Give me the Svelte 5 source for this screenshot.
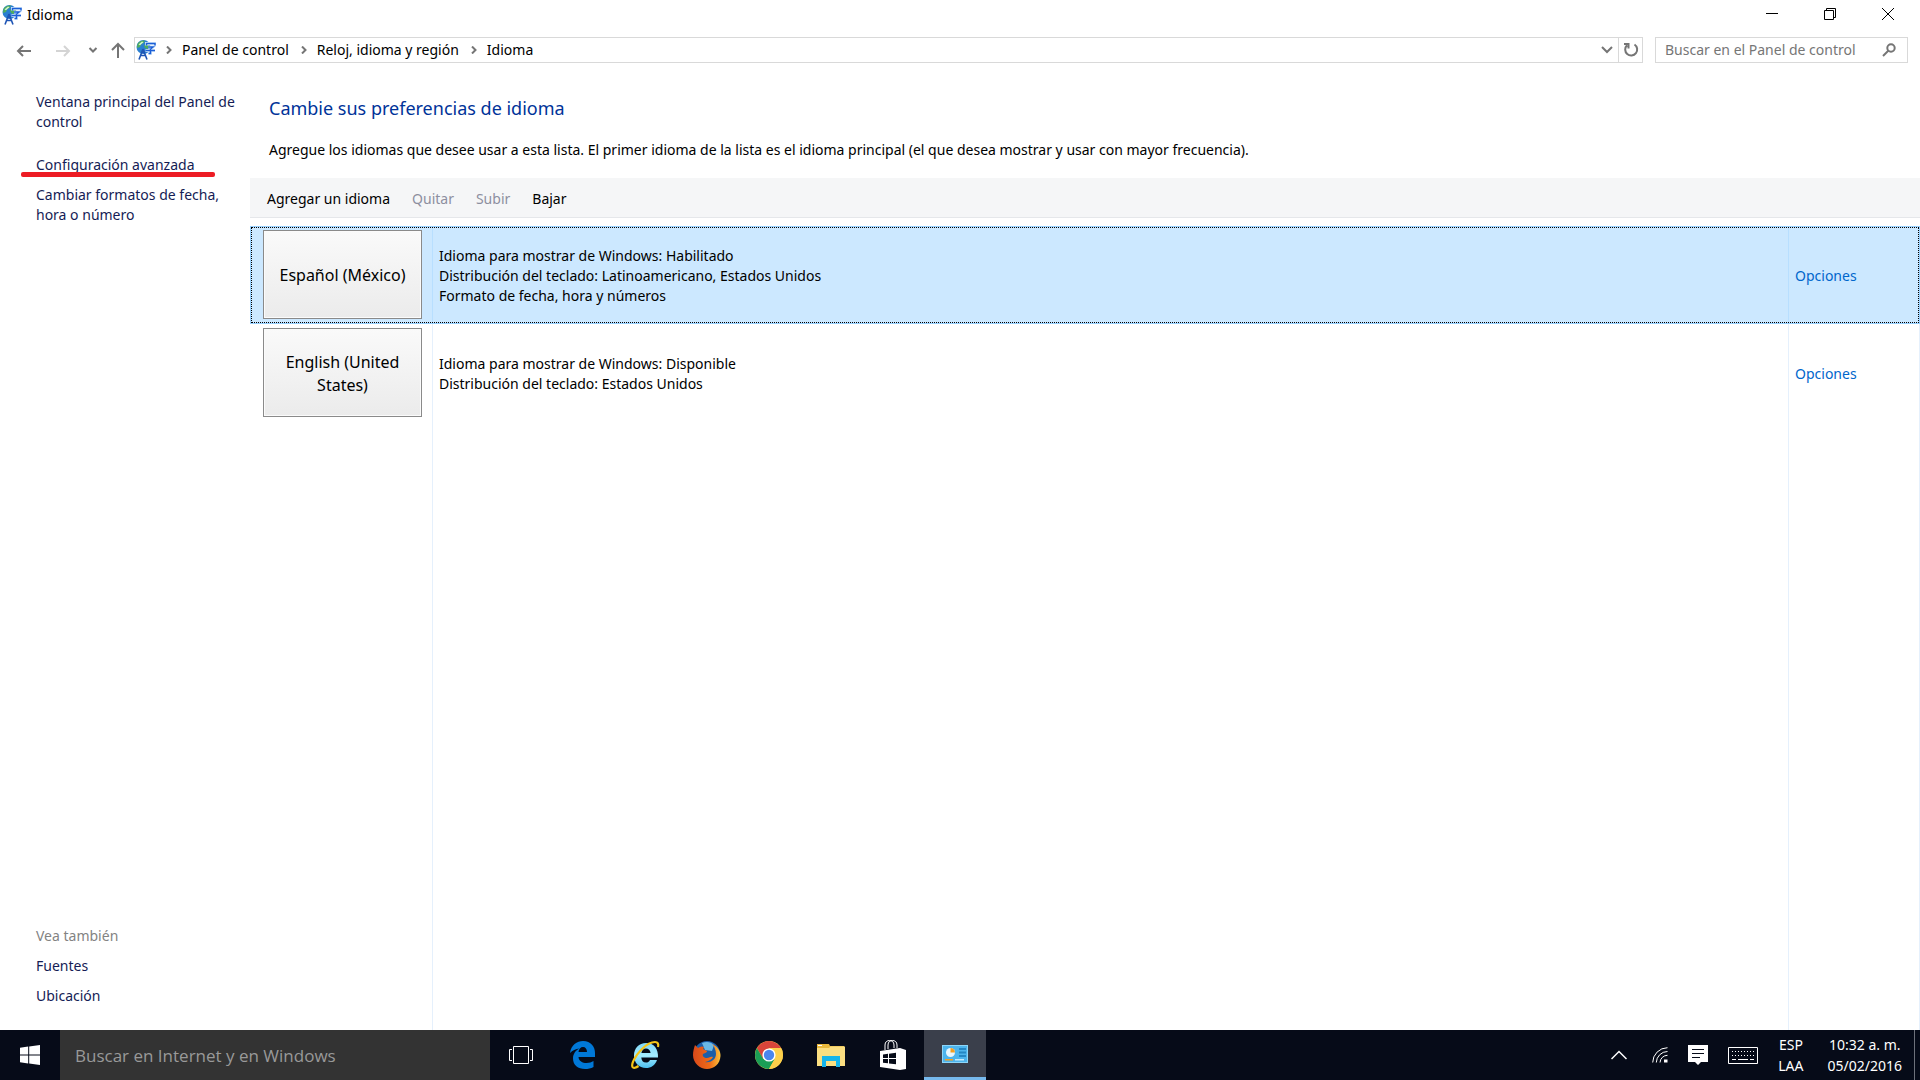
<script lang="ts">
  interface Language {
    name: string;
    details: string[];
    selected: boolean;
  }

  const crumbs = ['Panel de control', 'Reloj, idioma y región', 'Idioma'];

  const commands = [
    { label: 'Agregar un idioma', disabled: false },
    { label: 'Quitar', disabled: true },
    { label: 'Subir', disabled: true },
    { label: 'Bajar', disabled: false }
  ];

  let languages: Language[] = $state([
    {
      name: 'Español (México)',
      details: [
        'Idioma para mostrar de Windows: Habilitado',
        'Distribución del teclado: Latinoamericano, Estados Unidos',
        'Formato de fecha, hora y números'
      ],
      selected: true
    },
    {
      name: 'English (United States)',
      details: ['Idioma para mostrar de Windows: Disponible', 'Distribución del teclado: Estados Unidos'],
      selected: false
    }
  ]);

  function select(index: number) {
    languages.forEach((language, i) => (language.selected = i === index));
  }
</script>

{#snippet languageIcon()}
  <svg class="language-icon" width="20" height="20" viewBox="0 0 20 20" aria-hidden="true">
    <circle cx="7.5" cy="7" r="7" fill="#2a7fd0" />
    <path d="M1.500 4C3 1.500 6 0 9 .5L7.500 3 5 4.500 4 7 1 8zM8 5l4-2 2 2-2 4-3-1z" fill="#4fae5c" />
    <path d="M2.500 4.500L6 1.500l1.500.7-3.500 3z" fill="#d3f3cc" />
    <path d="M10.500 5.500V3.500h8.500v2M12 7h5l-2.500 2M9.500 10.500h9.500M14.500 9v4.500h-2" fill="none" stroke="#d5e8fb" stroke-width="3" />
    <path d="M10.500 5.500V3.500h8.500v2M12 7h5l-2.500 2M9.500 10.500h9.500M14.500 9v4.500h-2" fill="none" stroke="#1c5fd6" stroke-width="1.500" />
    <path d="M7 9L3 19.500M7 9l4 10.500M4.500 15.500h5M5.500 12.500h3" fill="none" stroke="#1f55b5" stroke-width="1.600" />
  </svg>
{/snippet}

<div class="screen">
  <header class="titlebar">
    {@render languageIcon()}
    <span class="title">Idioma</span>
    <div class="window-buttons">
      <button aria-label="Minimizar">
        <svg width="12" height="12" viewBox="0 0 12 12"><path d="M0 5.5h12" /></svg>
      </button>
      <button aria-label="Restaurar">
        <svg width="12" height="12" viewBox="0 0 12 12"><path d="M.5 2.5h9v9h-9zM2.500 2.500v-2h9v9h-2" /></svg>
      </button>
      <button aria-label="Cerrar">
        <svg width="12" height="12" viewBox="0 0 12 12"><path d="M0 0l12 12M12 0L0 12" /></svg>
      </button>
    </div>
  </header>

  <nav class="navbar" aria-label="Navegación">
    <button class="nav-button back" aria-label="Atrás">
      <svg width="16" height="14" viewBox="0 0 16 14"><path d="M15 8H2M7 3L2 8l5 5" /></svg>
    </button>
    <button class="nav-button forward" aria-label="Adelante" disabled>
      <svg width="16" height="14" viewBox="0 0 16 14"><path d="M1 8h13M9 3l5 5-5 5" /></svg>
    </button>
    <button class="nav-button recent" aria-label="Ubicaciones recientes">
      <svg width="10" height="6" viewBox="0 0 10 6"><path d="M1.500 1L5 4.500 8.500 1" /></svg>
    </button>
    <button class="nav-button up" aria-label="Subir un nivel">
      <svg width="14" height="16" viewBox="0 0 14 16"><path d="M7 16V2M1 8l6-6 6 6" /></svg>
    </button>

    <div class="address">
      {@render languageIcon()}
      {#each crumbs as crumb}
        <svg class="crumb-arrow" width="6" height="8" viewBox="0 0 6 8" aria-hidden="true"><path d="M1 .5L4.500 4 1 7.500" /></svg>
        <a href="#top">{crumb}</a>
      {/each}
      <button class="history" aria-label="Ubicaciones anteriores">
        <svg width="12" height="8" viewBox="0 0 12 8"><path d="M1 1l5 5 5-5" /></svg>
      </button>
      <button class="refresh" aria-label="Actualizar">
        <svg width="16" height="16" viewBox="0 0 16 16"><path d="M11.500 2.500A6 6 0 1 1 4 3.200M1 2h4.500v4.500" /></svg>
      </button>
    </div>

    <div class="search">
      <input type="text" placeholder="Buscar en el Panel de control" aria-label="Buscar en el Panel de control" />
      <svg width="14" height="14" viewBox="0 0 14 14" aria-hidden="true">
        <circle cx="9" cy="5" r="3.700" /><path d="M6.500 7.500L1 13" />
      </svg>
    </div>
  </nav>

  <div class="body">
    <aside class="sidebar">
      <a href="#home">Ventana principal del Panel de control</a>
      <a href="#advanced" class="marked">Configuración avanzada</a>
      <a href="#formats">Cambiar formatos de fecha, hora o número</a>
      <div class="see-also">
        <span>Vea también</span>
        <a href="#fonts">Fuentes</a>
        <a href="#location">Ubicación</a>
      </div>
    </aside>

    <main class="content">
      <h1>Cambie sus preferencias de idioma</h1>
      <p class="intro">
        Agregue los idiomas que desee usar a esta lista. El primer idioma de la lista es el idioma principal (el que
        desea mostrar y usar con mayor frecuencia).
      </p>

      <div class="toolbar">
        {#each commands as command}
          <button disabled={command.disabled}>{command.label}</button>
        {/each}
      </div>

      <div class="list">
        <table>
          <tbody>
            {#each languages as language, i}
              <tr class="language" class:selected={language.selected}>
                <td class="name"><button onclick={() => select(i)}>{language.name}</button></td>
                <td class="details">
                  {#each language.details as detail}
                    <div>{detail}</div>
                  {/each}
                </td>
                <td class="options"><a href="#options">Opciones</a></td>
              </tr>
            {/each}
            <tr class="filler"><td></td><td></td><td></td></tr>
          </tbody>
        </table>
      </div>
    </main>
  </div>

  <footer class="taskbar">
    <button class="start" aria-label="Inicio">
      <svg width="20" height="20" viewBox="0 0 20 20" fill="#fff">
        <path d="M0 2.800L8.200 1.600V9.500H0zM9.200 1.400L20 0v9.500H9.200zM0 10.500h8.200v7.900L0 17.200zM9.200 10.500H20V20L9.200 18.500z" />
      </svg>
    </button>
    <input class="cortana" type="text" placeholder="Buscar en Internet y en Windows" aria-label="Buscar en Internet y en Windows" />

    <button class="app" aria-label="Vista de tareas">
      <svg width="24" height="18" viewBox="0 0 24 18" fill="none" stroke="#fff">
        <path d="M4.500.5h15v17h-15zM3 3.500H.5v11H3M21 3.500h2.500v11H21" />
      </svg>
    </button>
    <button class="app" aria-label="Microsoft Edge">
      <svg width="26" height="28" viewBox="0 0 26 28">
        <path
          d="M0 12C1 4 7 0 13 0c8 0 12 6 12 12v4H8.500c.3 4 4 6 8 6 3 0 5-.8 7-2v6c-2.500 1.500-5.500 2-8.500 2C8 28 3 24 3 17.500 3 13 5.500 9.500 9.500 7.500 5.500 8 2.500 9.500 0 12zm8.500-1H17c0-3-1.500-5-4-5s-4.200 2-4.500 5z"
          fill="#0078d7"
        />
      </svg>
    </button>
    <button class="app" aria-label="Internet Explorer">
      <svg width="30" height="30" viewBox="0 0 30 30">
        <defs>
          <linearGradient id="ie" x1="0" y1="0" x2="0" y2="1">
            <stop offset="0" stop-color="#7fd8f8" /><stop offset=".5" stop-color="#a4ecff" /><stop offset="1" stop-color="#4cc0f0" />
          </linearGradient>
        </defs>
        <path
          d="M16 3C9 3 4 8 4 15.500S9 28 16 28c5 0 9-2.500 11-8h-7c-1 2-2.300 2.500-4 2.500-3 0-4.500-2-4.700-5H28C28.500 9 24 3 16 3zm-4.600 10C12 10 13.500 8.500 16 8.500s4.200 1.500 4.600 4.500z"
          fill="url(#ie)"
        />
        <path d="M28 7c.8-3-.2-5-3-5-3 0-8 2-13 7C5 16 1 24 2.500 27c1 1.500 3.500.8 6-1" fill="none" stroke="#f5c518" stroke-width="2.200" />
      </svg>
    </button>
    <button class="app" aria-label="Firefox">
      <svg width="28" height="28" viewBox="0 0 28 28">
        <defs>
          <linearGradient id="fox" x1="0" y1="0" x2="1" y2="0">
            <stop offset="0" stop-color="#d9491a" /><stop offset=".6" stop-color="#ee6a18" /><stop offset="1" stop-color="#fcc33c" />
          </linearGradient>
        </defs>
        <circle cx="14" cy="13" r="13" fill="#1b5ea8" />
        <path d="M9 2c5-2 9-1 12 2l-2 6-7-1z" fill="#6bb9e6" />
        <path
          d="M2 4l3 3c2-1.500 4-2 6-1l-1 2 4 2c0 2-3 2-4 3-1 2 1 4 4 4 2 0 3-2 6-1-2 4-8 5-8 5 5 1 11-2 11-8 0-4-2-8-4-10 5 2 9 7 8.500 12C27 23 21 28 14 28S0 22 0 14C0 10 1 7 2 4z"
          fill="url(#fox)"
        />
      </svg>
    </button>
    <button class="app" aria-label="Google Chrome">
      <svg width="28" height="28" viewBox="0 0 28 28">
        <circle cx="14" cy="14" r="14" fill="#fdd04b" />
        <path d="M14 7h12.100A14 14 0 0 0 1.900 7l6 10.500z" fill="#d9453a" />
        <path d="M1.900 7A14 14 0 0 0 14 28l6-10.500L14 20l-6-2.500z" fill="#1b9e56" />
        <path d="M20 17.500L14 28A14 14 0 0 0 26.100 7H14z" fill="#fdd04b" />
        <circle cx="14" cy="14" r="6.600" fill="#fff" />
        <circle cx="14" cy="14" r="5.200" fill="#4a86ee" />
      </svg>
    </button>
    <button class="app" aria-label="Explorador de archivos">
      <svg width="28" height="24" viewBox="0 0 28 24">
        <path d="M0 1h12l1 2h14v20H0z" fill="#e9b93c" />
        <path d="M0 5h12l1.500-1.500H28V23H0z" fill="#fbdf81" />
        <path d="M1 2h4v1H1z" fill="#fff" />
        <path d="M5 24V13h18v11h-4v-6H9v6z" fill="#16b5ea" />
      </svg>
    </button>
    <button class="app" aria-label="Tienda">
      <svg width="26" height="30" viewBox="0 0 26 30">
        <path d="M5 10V5c0-3 2-4.500 4.500-4.500S14 2 14 5v3M8 9V5c0-3 2-4.500 4.500-4.500S17 2 17 5v3" fill="none" stroke="#fff" />
        <path d="M0 11l20-3 6 2v19l-6 1-20-3z" fill="#fff" />
        <path d="M3 14.500l5-.7v4.200H3zM9 13.700l7-1V18H9zM3 19h5v4.200l-5-.5zM9 19h7v5.200l-7-.8z" fill="#060b18" />
      </svg>
    </button>
    <button class="app active" aria-label="Panel de control">
      <svg width="26" height="18" viewBox="0 0 26 18">
        <path d="M0 0h26v18H0z" fill="#8dd6f8" />
        <path d="M1 1h24v16H1z" fill="#4db4ec" />
        <circle cx="8.500" cy="7.500" r="4.500" fill="#e8f6fd" />
        <path d="M8.500 7.500V3a4.500 4.500 0 0 1 4.500 4.500z" fill="#f5a021" />
        <path d="M17 3h7v2h-7zM17 6.500h7v2h-7zM17 10h7v2h-7z" fill="#2587c4" />
        <path d="M3 14h8v1.500H3z" fill="#f5a021" /><path d="M13 14h9v1.500h-9z" fill="#c8ebfb" />
      </svg>
    </button>

    <div class="tray">
      <button aria-label="Mostrar iconos ocultos">
        <svg width="16" height="10" viewBox="0 0 16 10"><path d="M.5 9L8 1.500 15.500 9" stroke-width="1.500" /></svg>
      </button>
      <button class="wifi" aria-label="Red">
        <svg width="16" height="16" viewBox="0 0 16 16">
          <path d="M.7 15.500A15 15 0 0 1 15.500.7M4.300 15.500A11.300 11.300 0 0 1 15.500 4.500M8 15.500a7.500 7.500 0 0 1 7.500-7.200" />
          <path d="M12 12.500h3.500v3H12z" fill="#fff" stroke="none" />
        </svg>
      </button>
      <button aria-label="Centro de actividades">
        <svg width="20" height="20" viewBox="0 0 20 20">
          <path d="M0 0h20v17h-7l-3 3-3-3H0z" fill="#fff" stroke="none" />
          <path d="M4 4.500h12M4 8.500h12M4 12.500h8" stroke="#060b18" />
        </svg>
      </button>
      <button aria-label="Teclado táctil">
        <svg width="30" height="17" viewBox="0 0 30 17">
          <path d="M.5.5h29v16H.5z" />
          <path d="M4 4.500h23M4 8.500h23" stroke-dasharray="1 2" /><path d="M4 12.500h4M10 12.500h10M22 12.500h4" />
        </svg>
      </button>
      <button class="input-language" aria-label="Idioma de entrada"><span>ESP</span><span>LAA</span></button>
      <button class="clock" aria-label="Reloj"><span>10:32 a. m.</span><span>05/02/2016</span></button>
      <button class="show-desktop" aria-label="Mostrar escritorio"></button>
    </div>
  </footer>
</div>

<style>
  :global(body) {
    margin: 0;
    background: #fff;
  }

  .screen {
    display: flex;
    flex-direction: column;
    min-height: 100vh;
    font-family: 'Noto Sans', 'Open Sans', sans-serif;
    font-size: 14px;
    line-height: 20px;
    color: #000;
  }

  button,
  input {
    font: inherit;
    color: inherit;
    border: 0;
    padding: 0;
    background: none;
    border-radius: 0;
  }

  button svg {
    display: block;
  }

  a {
    color: inherit;
    text-decoration: none;
  }

  .language-icon {
    flex: none;
  }

  .titlebar {
    display: flex;
    align-items: center;
    height: 29px;
    padding: 0 3px 0 2px;
  }

  .title {
    flex: 1;
    padding-left: 5px;
  }

  .window-buttons {
    display: flex;
    align-self: flex-start;
  }

  .window-buttons button {
    display: grid;
    place-items: center;
    width: 58px;
    height: 28px;
  }

  .window-buttons svg {
    fill: none;
    stroke: #000;
  }

  .navbar {
    display: flex;
    align-items: center;
    height: 42px;
    padding: 0 12px 0 16px;
  }

  .navbar svg:not(.language-icon) {
    fill: none;
    stroke: #757575;
    stroke-width: 2;
  }

  .nav-button {
    flex: none;
  }

  .forward {
    margin-left: 23px;
  }

  .navbar .forward svg {
    stroke: #d4d4d4;
  }

  .recent {
    margin-left: 17px;
  }

  .up {
    margin: 0 9px 0 13px;
  }

  .address {
    display: flex;
    flex: 1;
    align-items: center;
    height: 24px;
    padding-left: 1px;
    border: 1px solid #d9d9d9;
  }

  .address a {
    margin-right: 2px;
  }

  .crumb-arrow {
    margin: 0 10px;
  }

  .history {
    display: grid;
    place-items: center;
    width: 22px;
    height: 24px;
    margin-left: auto;
  }

  .refresh {
    display: grid;
    place-items: center;
    width: 24px;
    height: 24px;
    border-left: 1px solid #d9d9d9;
  }

  .search {
    display: flex;
    align-items: center;
    width: 251px;
    height: 24px;
    margin-left: 12px;
    border: 1px solid #d9d9d9;
  }

  .search input {
    flex: 1;
    min-width: 0;
    padding-left: 9px;
  }

  .search input::placeholder {
    color: #767676;
  }

  .search svg {
    margin: 0 11px;
  }

  .body {
    display: flex;
    flex: 1;
  }

  .sidebar {
    display: flex;
    flex: none;
    flex-direction: column;
    gap: 10px;
    box-sizing: border-box;
    width: 250px;
    padding: 21px 10px 24px 36px;
    color: #151c55;
  }

  .marked {
    position: relative;
    margin-top: 13px;
  }

  .marked::after {
    content: '';
    position: absolute;
    left: -15px;
    top: 17px;
    width: 194px;
    height: 5px;
    border-radius: 2px;
    background: #ed1c24;
  }

  .see-also {
    display: flex;
    flex-direction: column;
    gap: 10px;
    margin-top: auto;
  }

  .see-also span {
    color: #838383;
  }

  .content {
    display: flex;
    flex: 1;
    flex-direction: column;
  }

  h1 {
    margin: 0;
    padding: 22px 19px 0;
    font-size: 18px;
    font-weight: 400;
    line-height: 30px;
    color: #003399;
  }

  .intro {
    margin: 17px 19px 18px;
  }

  .toolbar {
    display: flex;
    gap: 22px;
    height: 37px;
    padding: 2px 17px 0;
    border-bottom: 1px solid #e5e7ea;
    background: #f5f6f7;
  }

  .toolbar button:disabled {
    color: #8d8f9f;
  }

  .list {
    display: grid;
    flex: 1;
    margin-top: 8px;
  }

  table {
    width: 100%;
    border-collapse: separate;
    border-spacing: 0;
    table-layout: fixed;
  }

  td {
    box-sizing: border-box;
    padding: 0;
    border-right: 1px solid #e5f0fc;
  }

  td:first-child {
    width: 183px;
  }

  td:last-child {
    width: 131px;
  }

  .language {
    position: relative;
    height: 98px;
  }

  .selected {
    background: #cce8ff;
    outline: 1px solid #99d1ff;
    outline-offset: -1px;
  }

  .selected td {
    border-color: #b8dfff;
  }

  /* focus rectangle across the whole row */
  .selected .name::after {
    content: '';
    position: absolute;
    inset: 1px;
    border: 1px dotted #000;
    pointer-events: none;
  }

  .name {
    padding: 4px 0 5px 13px;
  }

  .name button {
    display: block;
    box-sizing: border-box;
    width: 159px;
    height: 89px;
    padding: 2px 12px 0;
    border: 1px solid #8a8a8a;
    box-shadow: inset 0 0 0 1px #fbfbfb;
    background: linear-gradient(#fafafa, #ebebeb);
    font-size: 16px;
    line-height: 23px;
  }

  .details,
  .options {
    padding: 2px 0 0 6px;
  }

  .options {
    color: #0066cc;
  }

  .taskbar {
    display: flex;
    height: 50px;
    background: #060b18;
    color: #fff;
  }

  .start {
    display: grid;
    place-items: center;
    width: 60px;
  }

  .cortana {
    box-sizing: border-box;
    width: 430px;
    padding: 2px 15px 0;
    background: #333;
    font-family: 'Open Sans', 'Noto Sans', sans-serif;
    font-size: 17px;
  }

  .cortana::placeholder {
    color: #999;
  }

  .app {
    display: grid;
    place-items: center;
    width: 62px;
  }

  .active {
    border-bottom: 3px solid #76b9ed;
    background: #3a3f4b;
  }

  .tray {
    display: flex;
    align-items: center;
    gap: 20px;
    margin-left: auto;
  }

  .tray svg {
    fill: none;
    stroke: #fff;
  }

  .wifi {
    margin-left: 5px;
  }

  .input-language,
  .clock {
    display: flex;
    flex-direction: column;
    align-items: center;
    line-height: 21px;
  }

  .clock {
    margin: 0 -8px 0 4px;
  }

  .show-desktop {
    align-self: stretch;
    width: 6px;
    border-left: 1px solid #6d717a;
  }
</style>
